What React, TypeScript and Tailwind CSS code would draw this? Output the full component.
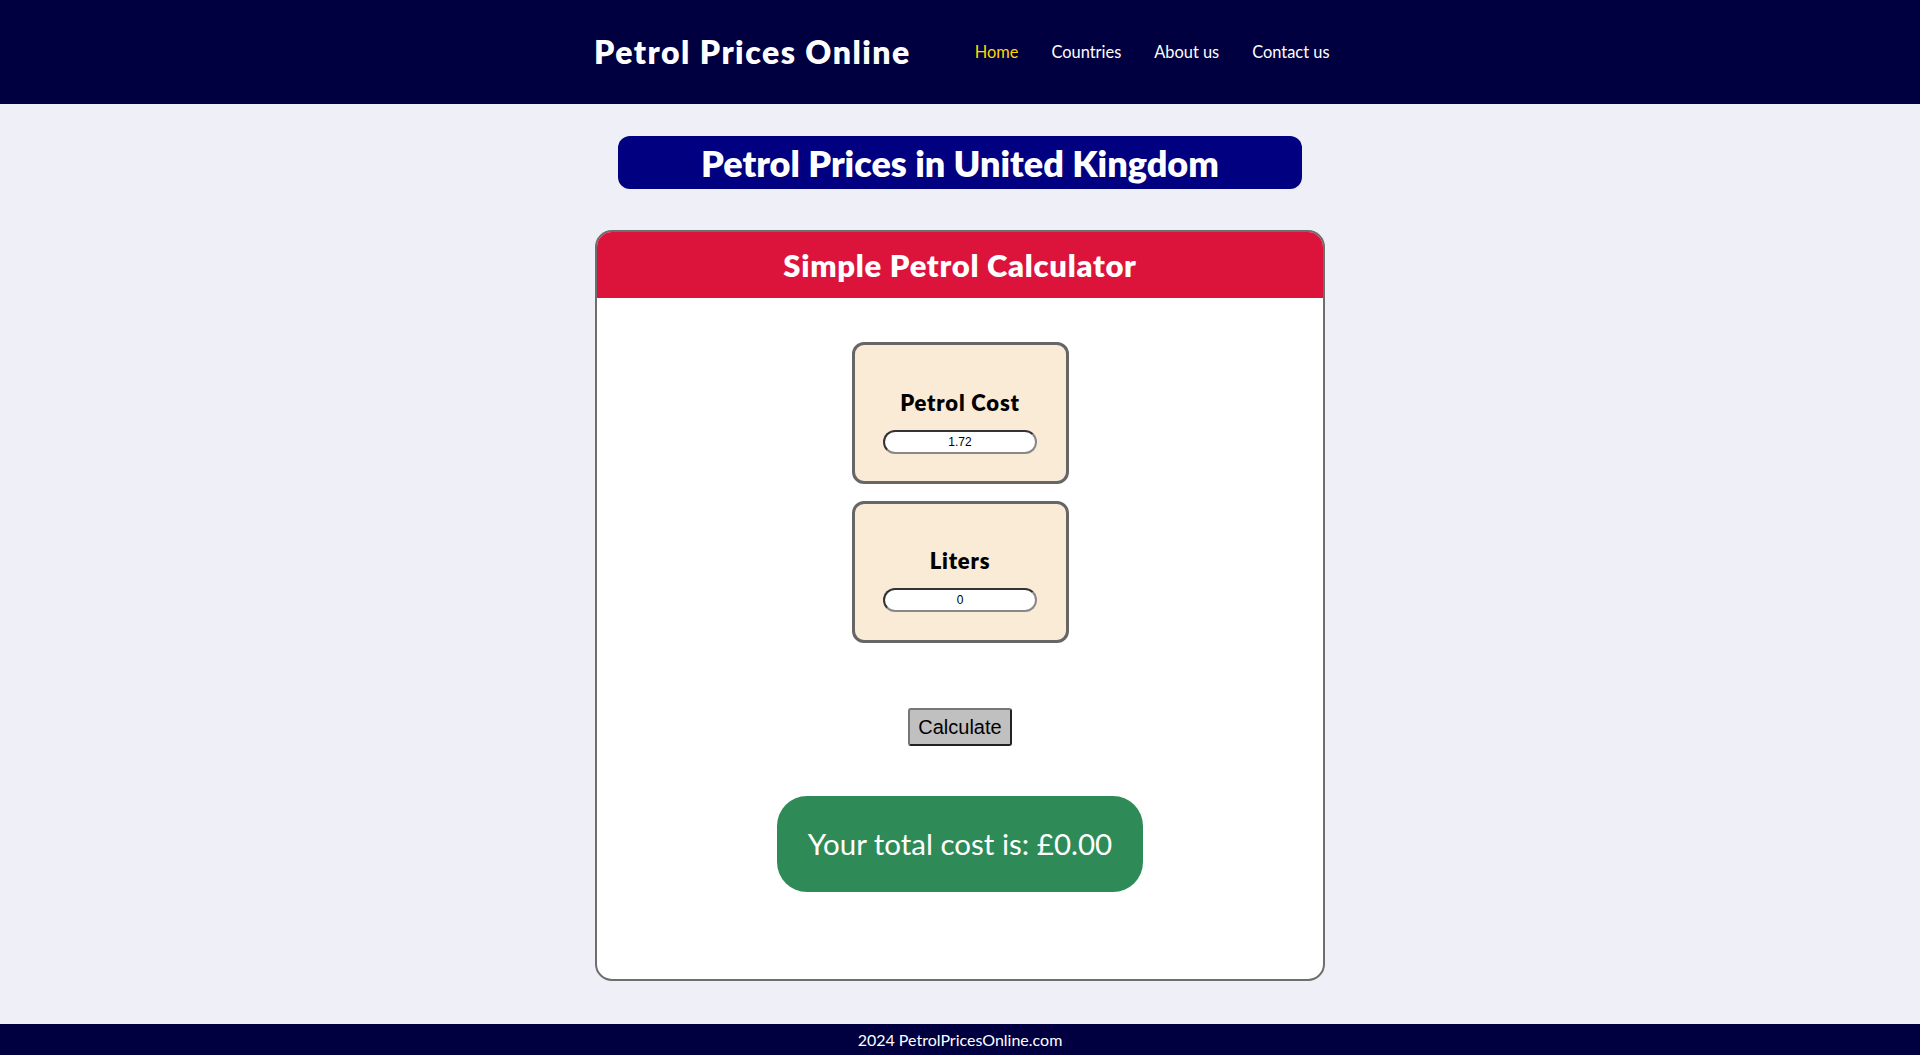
import { useState } from "react";

const heading = "font-['Lato','Open_Sans',sans-serif]";
const body = "font-['Lato','Noto_Sans',sans-serif]";
const field =
  "mt-[11px] w-[154px] h-[24px] rounded-full bg-white border-2 border-t-[#333] border-l-[#333] border-b-[#888] border-r-[#888] text-center text-[12px] font-['Liberation_Sans',Arial,sans-serif] text-black outline-none";

export default function App() {
  const [cost, setCost] = useState("1.72");
  const [liters, setLiters] = useState("0");
  const [total, setTotal] = useState(0);

  const calculate = () => {
    const c = parseFloat(cost) || 0;
    const l = parseFloat(liters) || 0;
    setTotal(c * l);
  };

  return (
    <div className={`min-h-[1055px] flex flex-col bg-[#efeff8] ${body}`}>
      <header className="h-[104px] bg-[#000040] flex justify-center">
        <div className="w-[732px] flex items-center gap-[64px] whitespace-nowrap">
          <h1 className={`shrink-0 text-[32px] font-extrabold text-white tracking-[1.5px] ${heading}`}>Petrol Prices Online</h1>
          <nav className="shrink-0 flex items-center gap-[33px] text-[16.4px] text-white">
            <a href="#" className="text-[#ffd700]">Home</a>
            <a href="#">Countries</a>
            <a href="#">About us</a>
            <a href="#">Contact us</a>
          </nav>
        </div>
      </header>

      <main className="flex flex-col items-center">
        <div className="mt-[32px] w-[684px] h-[53px] rounded-[12px] bg-[#000080] flex items-center justify-center">
          <h2 className={`text-[36px] font-extrabold text-white ${heading}`}>Petrol Prices in United Kingdom</h2>
        </div>

        <div className="mt-[41px] w-[730px] h-[751px] rounded-[17px] border-[2.5px] border-[#6e6e6e] bg-white overflow-hidden flex flex-col">
          <div className="h-[66px] bg-[#dc143c] flex items-center justify-center">
            <h3 className={`text-[31px] font-extrabold text-white tracking-[0.7px] ${heading}`}>Simple Petrol Calculator</h3>
          </div>

          <div className="flex flex-col items-center pt-[44px]">
            <div className="flex flex-col gap-[17px]">
              <div className="w-[217px] h-[142px] rounded-[12px] border-[3px] border-[#666] bg-[#faebd7] flex flex-col items-center pt-[41px]">
                <label className={`text-[22px] font-extrabold text-black tracking-[0.8px] ${heading}`}>Petrol Cost</label>
                <input value={cost} onChange={(e) => setCost(e.target.value)} className={field} />
              </div>
              <div className="w-[217px] h-[142px] rounded-[12px] border-[3px] border-[#666] bg-[#faebd7] flex flex-col items-center pt-[40px]">
                <label className={`text-[22px] font-extrabold text-black tracking-[0.8px] ${heading}`}>Liters</label>
                <input value={liters} onChange={(e) => setLiters(e.target.value)} className={field} />
              </div>
            </div>

            <button
              type="button"
              onClick={calculate}
              className="mt-[65px] w-[104px] h-[38px] bg-[#c0c0c0] rounded-[3px] border-2 border-t-[#767676] border-l-[#767676] border-b-[#222] border-r-[#222] text-[20px] text-black font-['Liberation_Sans',Arial,sans-serif]"
            >
              Calculate
            </button>

            <div className="mt-[50px] w-[366px] h-[96px] rounded-[30px] bg-[#2e8b57] flex items-center justify-center">
              <p className="text-[29.5px] text-white">Your total cost is: £{total.toFixed(2)}</p>
            </div>
          </div>
        </div>
      </main>

      <footer className="h-[31px] bg-[#000040] flex items-center justify-center mt-[43px]">
        <p className="text-[16px] text-white">2024 PetrolPricesOnline.com</p>
      </footer>
    </div>
  );
}
